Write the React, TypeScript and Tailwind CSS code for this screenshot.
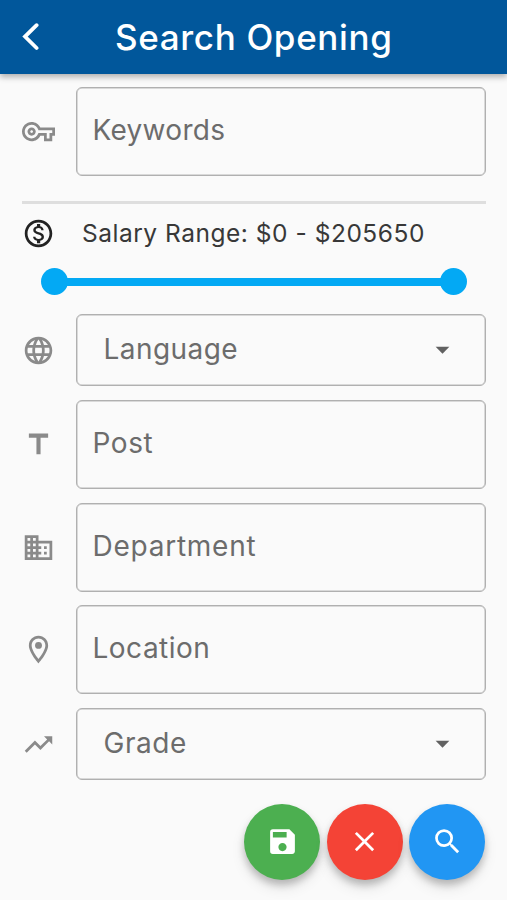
import type { ReactNode } from 'react';
import {
  MdArrowDropDown,
  MdBusiness,
  MdClose,
  MdLanguage,
  MdOutlineLocationOn,
  MdOutlineMonetizationOn,
  MdOutlineVpnKey,
  MdSave,
  MdSearch,
  MdTitle,
  MdTrendingUp,
} from 'react-icons/md';

interface FieldProps {
  icon: ReactNode;
  label: string;
  labelClass?: string;
}

const TextField = ({ icon, label, labelClass = '' }: FieldProps) => (
  <div className="flex h-[89px] items-center">
    <span className="flex w-[54px] text-[#8a8a8a]">{icon}</span>
    <div className="flex h-full flex-1 items-center rounded-[6px] border border-[#b0b0b0] pb-[3px] pl-[15.5px] text-[28px] text-[#6c6c6c] shadow-[inset_0_0_0_0.5px_#b8b8b8]">
      <span className={labelClass}>{label}</span>
    </div>
  </div>
);

const SelectField = ({ icon, label, labelClass = '' }: FieldProps) => (
  <div className="flex h-[72.5px] items-center">
    <span className="flex w-[54px] text-[#8a8a8a]">{icon}</span>
    <div className="flex h-full flex-1 items-center justify-between rounded-[6px] border border-[#b0b0b0] pr-[26px] pl-[26.5px] text-[28px] text-[#6c6c6c] shadow-[inset_0_0_0_0.5px_#b8b8b8]">
      <span className={`pb-[3px] ${labelClass}`}>{label}</span>
      <MdArrowDropDown size={33} className="mb-[2px] text-[#616161]" />
    </div>
  </div>
);

const SalaryRange = () => (
  <div className="mt-[25px] border-t-[3px] border-[#dedede]">
    <div className="flex h-[59px] items-center">
      <MdOutlineMonetizationOn size={33} className="text-[#222]" />
      <span className="ml-[27px] pb-[2px] text-[24.5px] tracking-[0.52px] text-[#383838]">Salary Range: $0 - $205650</span>
    </div>
    <div className="mt-[5px] mr-[19.5px] ml-[19px] flex h-[27px] items-center">
      <span className="size-[27px] rounded-full bg-[#03a9f4]" />
      <span className="-mx-px h-[8px] flex-1 bg-[#03a9f4]" />
      <span className="size-[27px] rounded-full bg-[#03a9f4]" />
    </div>
  </div>
);

const RoundButton = ({ color, label, children }: { color: string; label: string; children: ReactNode }) => (
  <button
    aria-label={label}
    className={`flex size-[76px] items-center justify-center rounded-full text-white shadow-[0_5px_7px_rgba(0,0,0,0.2),0_8px_14px_rgba(0,0,0,0.1)] ${color}`}
  >
    {children}
  </button>
);

export default function App() {
  return (
    <div className="h-[900px] w-[507px] overflow-hidden bg-[#fafafa] font-['Inter','Liberation_Sans',sans-serif]">
      <header className="flex h-[74px] items-center bg-[#01579b] pl-[22px] text-white shadow-[0_3px_6px_rgba(0,0,0,0.3)]">
        <svg width="17" height="28" viewBox="0 0 17 28" fill="none" stroke="currentColor" strokeWidth="3.8" strokeLinecap="round">
          <path d="M14.6 2.2L3 13.6l11.6 11.4" />
        </svg>
        <h1 className="ml-[76px] pt-px text-[35px] font-medium tracking-[0.65px] whitespace-nowrap">Search Opening</h1>
      </header>

      <main className="pt-[13.4px] pr-[21px] pl-[22px]">
        <TextField icon={<MdOutlineVpnKey size={33} />} label="Keywords" labelClass="tracking-[0.3px]" />
        <SalaryRange />
        <div className="mt-[18.6px] space-y-[13.6px]">
          <SelectField icon={<MdLanguage size={33} />} label="Language" labelClass="tracking-[0.45px]" />
          <TextField icon={<MdTitle size={33} />} label="Post" labelClass="tracking-[0.6px]" />
          <TextField icon={<MdBusiness size={33} />} label="Department" labelClass="tracking-[0.75px]" />
          <TextField icon={<MdOutlineLocationOn size={33} />} label="Location" labelClass="tracking-[0.5px]" />
          <SelectField icon={<MdTrendingUp size={33} />} label="Grade" labelClass="tracking-[0.55px]" />
        </div>

        <div className="mt-[23.4px] flex justify-end gap-[6.5px] pr-px">
          <RoundButton color="bg-[#4caf50]" label="Save">
            <MdSave size={33} />
          </RoundButton>
          <RoundButton color="bg-[#f44336]" label="Clear">
            <MdClose size={33} />
          </RoundButton>
          <RoundButton color="bg-[#2196f3]" label="Search">
            <MdSearch size={33} />
          </RoundButton>
        </div>
      </main>
    </div>
  );
}
